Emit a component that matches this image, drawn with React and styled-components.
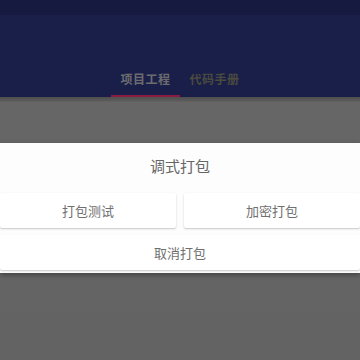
import React from 'react'
import styled, { createGlobalStyle } from 'styled-components'

const Global = createGlobalStyle`
  html, body {
    margin: 0;
    padding: 0;
    background: #636363;
    font-family: "Noto Sans CJK SC", "Noto Sans", sans-serif;
  }
  #root {
    width: 360px;
    height: 360px;
    overflow: hidden;
  }
`

const Page = styled.div`
  width: 360px;
  height: 360px;
  display: flex;
  flex-direction: column;
  background: #636363;
`

const StatusBar = styled.div`
  height: 15px;
  background: #161a40;
`

const Header = styled.div`
  height: 82px;
  background: #1a1f4a;
  display: flex;
  align-items: flex-end;
  justify-content: center;
`

const Tab = styled.div`
  width: 69px;
  height: 32px;
  box-sizing: border-box;
  display: flex;
  align-items: flex-start;
  justify-content: center;
  padding-top: 5px;
  font-size: 12px;
  font-weight: 700;
  letter-spacing: 0.5px;
  color: ${p => (p.active ? '#6c6c6e' : '#4a4a3e')};
  border-bottom: 2px solid ${p => (p.active ? '#8a1c40' : 'transparent')};
`

const Mask = styled.div`
  flex: 1;
  display: flex;
  flex-direction: column;
  padding-top: 46px;
  background: linear-gradient(#4e4e4e 0, #5c5c5c 4px, #666 5px, #636363 100%);
`

const Dialog = styled.div`
  background: #fdfdfd;
  display: flex;
  flex-direction: column;
  padding-bottom: 3px;
  box-shadow: 0 2px 5px rgba(0, 0, 0, 0.35);
`

const Title = styled.div`
  height: 50px;
  box-sizing: border-box;
  padding-bottom: 5px;
  display: flex;
  align-items: center;
  justify-content: center;
  font-size: 15px;
  color: #666;
`

const Row = styled.div`
  display: flex;
  gap: 8px;
  margin-bottom: 7px;
  &:last-child {
    margin-bottom: 0;
  }
`

const Button = styled.div`
  flex: 1;
  height: 35px;
  display: flex;
  align-items: center;
  justify-content: center;
  background: #fff;
  font-size: 13px;
  color: #707070;
  border-radius: 2px;
  box-shadow: 0 1px 2px rgba(0, 0, 0, 0.22);
`

export default function App() {
  return (
    <Page>
      <Global />
      <StatusBar />
      <Header>
        <Tab active>项目工程</Tab>
        <Tab>代码手册</Tab>
      </Header>
      <Mask>
        <Dialog>
          <Title>调式打包</Title>
          <Row>
            <Button>打包测试</Button>
            <Button>加密打包</Button>
          </Row>
          <Row>
            <Button>取消打包</Button>
          </Row>
        </Dialog>
      </Mask>
    </Page>
  )
}
